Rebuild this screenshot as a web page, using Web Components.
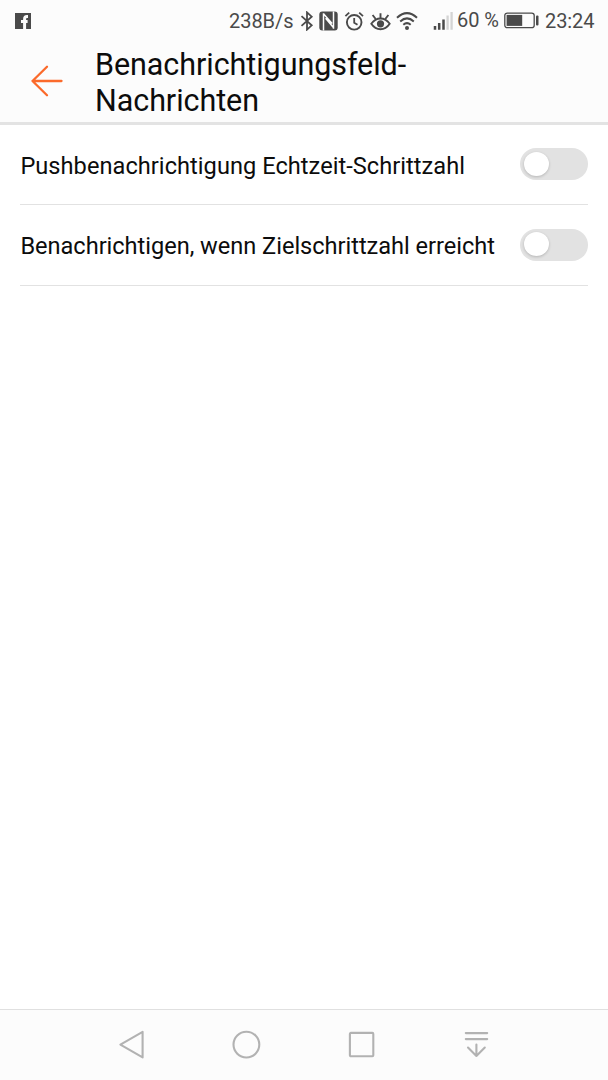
<!DOCTYPE html>
<html lang="de">
<head>
<meta charset="utf-8">
<title>Benachrichtigungsfeld-Nachrichten</title>
<style>
  html, body { margin: 0; height: 100%; }
  body { font-family: Roboto, "Liberation Sans", sans-serif; background: #fff; color: #0c0c0c; overflow: hidden; }
</style>
</head>
<body>
<settings-screen>
  <status-bar slot="status"></status-bar>
  <title-bar slot="title">Benachrichtigungsfeld-<br>Nachrichten</title-bar>
  <switch-row style="--spacing: 0.04px; height: 80px">Pushbenachrichtigung Echtzeit-Schrittzahl</switch-row>
  <switch-row style="--spacing: -0.03px">Benachrichtigen, wenn Zielschrittzahl erreicht</switch-row>
  <nav-bar slot="nav"></nav-bar>
</settings-screen>

<script>
class SettingsScreen extends HTMLElement {
  connectedCallback() {
    this.attachShadow({ mode: "open" }).innerHTML = `
      <style>
        :host { display: flex; flex-direction: column; height: 1080px; width: 608px; }
        main { flex: 1; padding: 0 20px; }
      </style>
      <slot name="status"></slot>
      <slot name="title"></slot>
      <main><slot></slot></main>
      <slot name="nav"></slot>
    `;
  }
}

class StatusBar extends HTMLElement {
  connectedCallback() {
    this.attachShadow({ mode: "open" }).innerHTML = `
      <style>
        :host {
          display: flex;
          align-items: center;
          height: 41px;
          padding: 0 14px 0 15px;
          box-sizing: border-box;
          background: #fcfcfc;
          color: #4a4a4a;
          font-size: 20px;
        }
        svg { display: block; flex: none; fill: none; stroke: currentColor; stroke-width: 2; }
        span { white-space: nowrap; flex: none; line-height: 41px; }
        .rate { width: 65px; margin: 2px 0 0 auto; letter-spacing: -0.05px; }
        .percent { width: 43px; margin-left: 4px; letter-spacing: -0.1px; }
        .clock { width: 49px; margin: 2px 0 0 6px; letter-spacing: -0.1px; }
      </style>
      <svg width="16" height="16" viewBox="0 0 16 16">
        <path d="M0 0h16v16H0z" fill="currentColor" stroke="none"/>
        <path d="M13 3.5h-1Q9.6 3.5 9.6 5.9V16M6 8.6h6.6" stroke="#fcfcfc" stroke-width="3"/>
      </svg>
      <span class="rate">238B/s</span>
      <svg width="14" height="20" viewBox="0 0 14 20" style="margin-left:6px">
        <path d="M1.5 5.2l10.2 9.1L7 18.6V1.4l4.7 4.3L1.5 14.8" stroke-width="1.8"/>
      </svg>
      <svg width="19" height="20" viewBox="0 0 19 20" style="margin-left:5px">
        <rect x=".3" y=".5" width="18.4" height="19" rx="3" fill="currentColor" stroke="none"/>
        <path d="M4.5 19.5V2.2M4.7 3l8.4 9.4M6.6 7.2l7.8 9.4M14.5.5v17.3" stroke="#fcfcfc" stroke-width="1.5"/>
      </svg>
      <svg width="20" height="20" viewBox="0 0 20 20" style="margin-left:6px">
        <circle cx="10.2" cy="11.3" r="7.3" stroke-width="1.9"/>
        <path d="M10.2 7v4.7l3.3 2M1.4 5.2l3.8-3.5M19 5.2l-3.8-3.5" stroke-width="1.8"/>
      </svg>
      <svg width="21" height="20" viewBox="0 0 21 20" style="margin-left:6px">
        <path d="M1.3 12.7Q5 7.5 10.5 7.5t9.2 5.2Q16 18.2 10.5 18.2T1.3 12.7z" stroke-width="1.9"/>
        <circle cx="10.5" cy="12.8" r="3.6" fill="currentColor" stroke="none"/>
        <path d="M10.5 7.5V2.2M5.7 8L2.6 4M15.3 8l3.1-4" stroke-width="1.9"/>
      </svg>
      <svg width="22" height="20" viewBox="0 0 22 20" style="margin-left:5px">
        <path d="M1 6.8Q11-2.6 21 6.8M4.2 10.4q6.8-6 13.6 0M7.3 13.7q3.7-3.1 7.4 0"/>
        <circle cx="11" cy="17" r="2" fill="currentColor" stroke="none"/>
      </svg>
      <svg width="20" height="20" viewBox="0 0 20 20" style="margin-left:15px">
        <path d="M2 15v3.7M6.2 12v6.7M10.5 8.5v10.2" stroke-width="2.5"/>
        <path d="M14.6 4.5v14.2M18.6 1v17.7" stroke="#d4d4d4" stroke-width="2.3"/>
      </svg>
      <span class="percent">60 %</span>
      <svg width="35" height="17" viewBox="0 0 35 17" style="margin-left:4px;margin-top:-1px">
        <rect x=".8" y="1.1" width="29.4" height="14.6" rx="2.5" stroke-width="1.3"/>
        <path d="M2.6 2.9h15.6v11H2.6z" fill="currentColor" stroke="none"/>
        <rect x="32" y="3.5" width="2.5" height="10" rx="1" fill="currentColor" stroke="none"/>
      </svg>
      <span class="clock">23:24</span>
    `;
  }
}

class TitleBar extends HTMLElement {
  connectedCallback() {
    this.attachShadow({ mode: "open" }).innerHTML = `
      <style>
        :host {
          display: flex;
          height: 84px;
          box-sizing: border-box;
          padding-left: 30px;
          background: #fcfcfc;
          border-bottom: 3px solid #e3e3e3;
        }
        svg { flex: none; margin: 23px 31px 0 0; fill: none; stroke: #fb6a2b; stroke-width: 2.3; stroke-linecap: round; stroke-linejoin: round; }
        h1 { margin: 6px 0 0; font-weight: 400; font-size: 30.5px; line-height: 36px; letter-spacing: -0.06px; white-space: nowrap; }
      </style>
      <svg width="34" height="34" viewBox="0 0 34 34"><path d="M31.5 17h-29M17 2.7L2.5 17 17 31.3"/></svg>
      <h1><slot></slot></h1>
    `;
  }
}

class ToggleSwitch extends HTMLElement {
  connectedCallback() {
    this.attachShadow({ mode: "open" }).innerHTML = `
      <style>
        :host {
          display: flex;
          flex: none;
          align-items: center;
          width: 68px;
          height: 32px;
          box-sizing: border-box;
          padding: 0 0 1px 4px;
          border-radius: 16px;
          background: #e2e2e2;
        }
        i { width: 25px; height: 24px; border-radius: 50%; background: #fff; box-shadow: 0 1px 3px rgba(0, 0, 0, 0.2); }
      </style>
      <i></i>
    `;
  }
}

class SwitchRow extends HTMLElement {
  connectedCallback() {
    this.attachShadow({ mode: "open" }).innerHTML = `
      <style>
        :host {
          display: flex;
          align-items: center;
          justify-content: space-between;
          height: 81px;
          box-sizing: border-box;
          border-bottom: 1px solid #e2e2e2;
          font-size: 23.6px;
          letter-spacing: var(--spacing, 0);
          white-space: nowrap;
        }
        span { padding: 2px 0 0 0.4px; }
        toggle-switch { margin-bottom: 1px; }
      </style>
      <span><slot></slot></span>
      <toggle-switch></toggle-switch>
    `;
  }
}

class NavBar extends HTMLElement {
  connectedCallback() {
    this.attachShadow({ mode: "open" }).innerHTML = `
      <style>
        :host {
          display: flex;
          justify-content: space-between;
          align-items: center;
          height: 71px;
          box-sizing: border-box;
          padding: 0 117px 0 116px;
          background: #fcfcfc;
          border-top: 1px solid #e0e0e0;
        }
        svg { display: block; fill: none; stroke: #b2b2b2; stroke-width: 2.1; stroke-linejoin: round; stroke-linecap: round; }
      </style>
      <svg width="30" height="30" viewBox="0 0 30 30"><path d="M4.4 14.6L26.6 1.8v25.6z"/></svg>
      <svg width="30" height="30" viewBox="0 0 30 30"><circle cx="15.4" cy="14.6" r="12.9"/></svg>
      <svg width="30" height="30" viewBox="0 0 30 30"><rect x="3.9" y="2.9" width="23.4" height="23.4" rx="1"/></svg>
      <svg width="30" height="30" viewBox="0 0 30 30"><path d="M4.8 3.1h21.4M4.8 9.1h21.4M15.4 14.6V26M7 17.6l8.4 8.4 8.4-8.4"/></svg>
    `;
  }
}

customElements.define("settings-screen", SettingsScreen);
customElements.define("status-bar", StatusBar);
customElements.define("title-bar", TitleBar);
customElements.define("toggle-switch", ToggleSwitch);
customElements.define("switch-row", SwitchRow);
customElements.define("nav-bar", NavBar);
</script>
</body>
</html>
